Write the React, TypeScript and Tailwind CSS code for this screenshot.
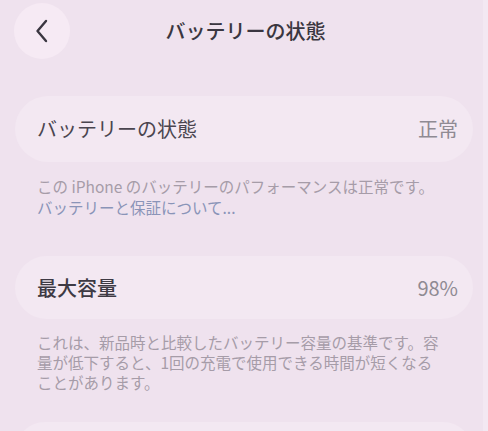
import React from "react";

export default function App() {
  const font = { fontFamily: '"Noto Sans CJK JP", "Noto Sans", sans-serif' };
  return (
    <div className="w-[488px] h-[431px] overflow-hidden bg-[#efe2ee] flex" style={font}>
      <div className="flex-1 flex flex-col">
        <div className="relative h-[62px] shrink-0 flex items-center justify-center">
          <div className="absolute left-[14px] top-[3px] w-[56px] h-[56px] rounded-full bg-[#f6eaf4] flex items-center justify-center">
            <svg width="16" height="26" viewBox="0 0 16 26" fill="none">
              <path d="M12 3 L3.5 13 L12 23" stroke="#3a3640" strokeWidth="2.4" strokeLinecap="round" strokeLinejoin="round" />
            </svg>
          </div>
          <span className="text-[20px] font-medium text-[#3a3640] ml-[8px] -mt-[1px]">バッテリーの状態</span>
        </div>

        <div className="shrink-0 mt-[34px] ml-[15px] mr-[10px] h-[66px] rounded-[33px] bg-[#f3e8f2] flex items-center justify-between pl-[22px] pr-[15px]">
          <span className="text-[20px] text-[#4a454f]">バッテリーの状態</span>
          <span className="text-[20px] text-[#8f8a93]">正常</span>
        </div>
        <div className="shrink-0 pl-[37px] pr-[20px] pt-[14px] text-[15.5px] leading-[21px] text-[#a69ca8]">
          <div className="whitespace-nowrap">この iPhone のバッテリーのパフォーマンスは正常です。</div>
          <div className="text-[#8a94b8]">バッテリーと保証について...</div>
        </div>

        <div className="shrink-0 mt-[38px] ml-[15px] mr-[10px] h-[63px] rounded-[32px] bg-[#f3e8f2] flex items-center justify-between pl-[22px] pr-[15px]">
          <span className="text-[20px] font-medium text-[#3e3a44]">最大容量</span>
          <span className="text-[20px] text-[#8f8a93]">98%</span>
        </div>
        <div className="shrink-0 pl-[37px] pr-[10px] pt-[13px] text-[15.5px] leading-[20px] text-[#a69ca8] whitespace-nowrap">
          <div>これは、新品時と比較したバッテリー容量の基準です。容</div>
          <div>量が低下すると、1回の充電で使用できる時間が短くなる</div>
          <div>ことがあります。</div>
        </div>

        <div className="shrink-0 mt-[30px] ml-[15px] mr-[10px] h-[60px] rounded-[30px] bg-[#f3e8f2]" />
      </div>
      <div className="w-[5px] bg-[#f3e8f2]" />
    </div>
  );
}
